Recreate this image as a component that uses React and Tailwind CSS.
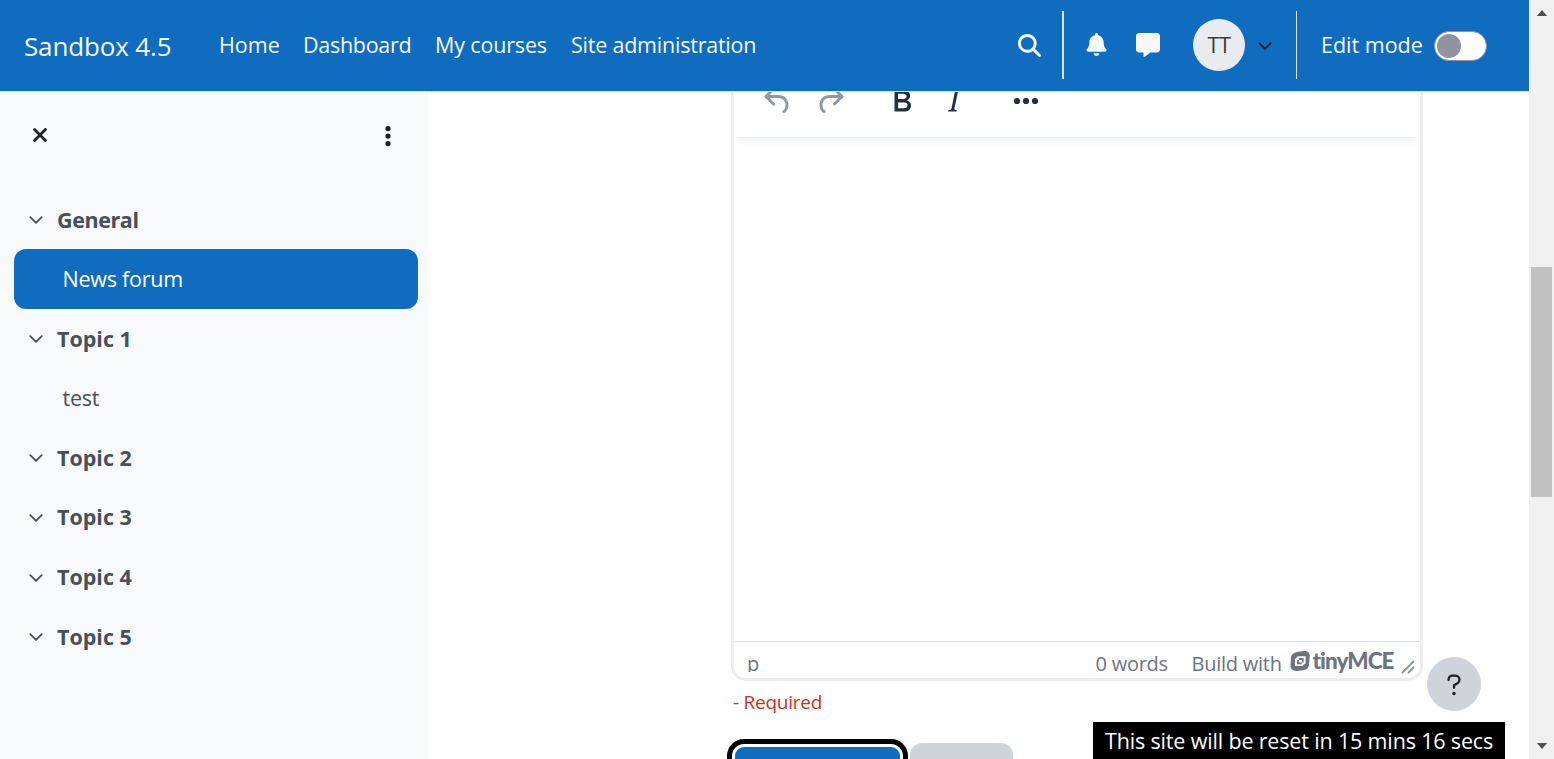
import React from "react";
import { FaMagnifyingGlass, FaBell, FaMessage, FaXmark, FaEllipsisVertical } from "react-icons/fa6";

function Chevron({ className }) {
  return (
    <svg viewBox="0 0 14 8" className={className} fill="none" stroke="currentColor" strokeWidth="1.8" strokeLinecap="round" strokeLinejoin="round">
      <path d="M1.300 1.200 L7 6.900 L12.700 1.200" />
    </svg>
  );
}

function ToolIcon({ d, className }) {
  return (
    <svg viewBox="0 0 24 24" className={`h-9 w-9 shrink-0 ${className}`} fill="currentColor" fillRule="evenodd">
      <path d={d} />
    </svg>
  );
}

const icons = {
  undo: "M6.4 8H12c3.7 0 6.2 2 6.8 5.1.6 2.7-.4 5.6-2.3 6.8a1 1 0 0 1-1-1.8c1.1-.6 1.8-2.7 1.4-4.6-.5-2.1-2.1-3.5-4.9-3.5H6.4l3.3 3.3a1 1 0 1 1-1.4 1.4l-5-5a1 1 0 0 1 0-1.4l5-5a1 1 0 0 1 1.4 1.4L6.4 8Z",
  redo: "M17.6 10H12c-2.8 0-4.4 1.4-4.9 3.5-.4 2 .3 4 1.4 4.6a1 1 0 1 1-1 1.8c-2-1.2-2.9-4.1-2.3-6.8.6-3 3-5.1 6.8-5.1h5.6l-3.3-3.3a1 1 0 1 1 1.4-1.4l5 5a1 1 0 0 1 0 1.4l-5 5a1 1 0 0 1-1.4-1.4l3.3-3.3Z",
  bold: "M7.8 19c-.3 0-.5 0-.6-.2l-.2-.5V5.7c0-.2 0-.4.2-.5l.6-.2h5c1.5 0 2.7.3 3.5 1 .7.6 1.1 1.4 1.1 2.5a3 3 0 0 1-.6 1.9c-.4.6-1 1-1.6 1.2.4.1.9.3 1.3.6s.8.7 1 1.2c.4.4.5 1 .5 1.6 0 1.3-.4 2.3-1.3 3-.8.7-2.1 1-3.8 1H7.8Zm5-8.3c.6 0 1.2-.1 1.6-.5.4-.3.6-.7.6-1.3 0-1.1-.8-1.7-2.3-1.7H9.3v3.5h3.4Zm.5 6c.7 0 1.3-.1 1.7-.4.4-.4.6-.9.6-1.5s-.2-1-.7-1.4c-.4-.3-1-.4-2-.4H9.4v3.8h4Z",
  italic: "m16.7 4.7-.1.9h-.3c-.6 0-1 0-1.4.3-.3.3-.4.6-.5 1.1l-2.1 9.8v.6c0 .5.4.8 1.4.8h.2l-.2.8H8l.2-.8h.2c1.1 0 1.8-.5 2-1.5l2-9.8.1-.5c0-.6-.4-.8-1.4-.8h-.3l.2-.9h5.8Z",
};

function Header() {
  return (
    <header className="flex h-[92px] shrink-0 items-center border-b border-[#dee2e6] bg-[#0f6cbf] pb-[2px] text-[21.5px] leading-none text-[#f8f9fa]">
      <div className="ml-6 w-[195px] pt-[3px] text-[26px] tracking-[-0.150px] whitespace-nowrap">Sandbox 4.5</div>
      <nav className="flex pt-px whitespace-nowrap">
        <a className="w-[84px]">Home</a>
        <a className="w-[132px] tracking-[-0.300px]">Dashboard</a>
        <a className="w-[136px] tracking-[-0.150px]">My courses</a>
        <a className="tracking-[-0.220px]">Site administration</a>
      </nav>
      <div className="ml-auto flex items-center">
        <FaMagnifyingGlass className="mt-px size-[23px]" />
        <div className="ml-[21px] h-[68px] w-[2px] bg-[#dee2e6]" />
        <FaBell className="ml-[20.500px] size-[23px]" />
        <FaMessage className="ml-[28.500px] size-[24px]" />
        <div className="mt-px ml-[33px] flex size-[52px] items-center justify-center rounded-full bg-[#e9ecef] tracking-[-0.300px] text-[#343a40]">TT</div>
        <Chevron className="mt-[2px] ml-[12.500px] h-[8px] w-[14px] text-[#1d2125]" />
        <div className="ml-[24.500px] h-[68px] w-px bg-[#dee2e6]" />
        <span className="ml-[24px] w-[113px] pt-px whitespace-nowrap">Edit mode</span>
        <div className="mt-[2px] mr-[42px] flex h-[30px] w-[53px] items-center rounded-full border border-[#8f959e] bg-white pl-[2px]">
          <div className="size-[24px] rounded-full bg-[#8f959e]" />
        </div>
      </div>
    </header>
  );
}

function Section({ title }) {
  return (
    <div className="flex h-[59.6px] items-center pl-[29px] font-bold">
      <Chevron className="mt-px h-[8px] w-[14px]" />
      <span className={title === "General" ? "ml-[14px] pt-px tracking-[-0.400px]" : "ml-[14px]"}>{title}</span>
    </div>
  );
}

function Sidebar() {
  return (
    <aside className="w-[428px] shrink-0 bg-[#f8f9fa] text-[21.5px] text-[#495057]">
      <div className="flex h-[97.8px] items-start justify-between pt-[32px] pr-[28px] pl-[29px] text-[#1d2125]">
        <FaXmark className="size-[22px]" />
        <FaEllipsisVertical className="size-[24px]" />
      </div>
      <Section title="General" />
      <div className="mr-[10px] ml-[14px] flex h-[59.6px] items-center rounded-xl bg-[#0f6cbf] pl-[48.500px] tracking-[-0.250px] text-white">News forum</div>
      <Section title="Topic 1" />
      <div className="flex h-[59.6px] items-center pl-[62.500px] tracking-[-0.250px]">test</div>
      <Section title="Topic 2" />
      <Section title="Topic 3" />
      <Section title="Topic 4" />
      <Section title="Topic 5" />
    </aside>
  );
}

function Editor() {
  return (
    <div className="flex h-[589px] w-[692px] flex-col overflow-hidden rounded-b-[15px] border-x-[3px] border-b-[3px] border-[#eeeeee] bg-white">
      <div className="h-[45px] shrink-0 overflow-hidden">
        <div className="-mt-[9px] flex pl-[26px] text-[#222f3e]">
          <ToolIcon d={icons.undo} className="text-[#9197a0]" />
          <ToolIcon d={icons.redo} className="ml-[16px] text-[#9197a0]" />
          <ToolIcon d={icons.bold} className="ml-[36px]" />
          <ToolIcon d={icons.italic} className="ml-[16px]" />
          <svg viewBox="0 0 36 36" className="ml-[36px] h-9 w-9" fill="currentColor">
            <circle cx="9" cy="18" r="3.1" />
            <circle cx="18" cy="18" r="3.1" />
            <circle cx="27" cy="18" r="3.1" />
          </svg>
        </div>
      </div>
      <div className="h-[22px] shrink-0 overflow-hidden px-[1px]">
        <div className="-mt-[20px] h-[20px] shadow-[0_2px_2px_-2px_rgba(34,47,62,0.1),0_8px_8px_-4px_rgba(34,47,62,0.07)]" />
      </div>
      <div className="flex-1" />
      <div className="flex h-[37px] shrink-0 items-start border-t border-[#e3e3e3] pr-[5px] pl-[13px] text-[20px] leading-[43px] tracking-[-0.250px] text-[#6b747f]">
        <span className="h-[30px] overflow-hidden">p</span>
        <span className="ml-auto w-[96px] whitespace-nowrap">0 words</span>
        <span className="w-[98px] whitespace-nowrap">Build with</span>
        <svg viewBox="0 0 20 20" className="mt-[9px] size-5" fill="currentColor">
          <path d="M7 .9 13.500.1C17.500-.3 20 2 19.700 5.500l-.6 8c-.2 3-1.900 5-4.900 5.500l-6.900.9C3 20.300.300 18.300.500 15L.9 7C1.100 3.500 3.300 1.400 7 .9Z" />
          <path d="M8 5.200h7.600v7L12.300 15H5V8Z" fill="#fff" />
          <path d="M8.900 7.100h4.700v4.400h-1.900v1.800H7V9h1.900Z" />
          <path d="M8.900 9h2.900v2.600H8.900Z" fill="#fff" />
        </svg>
        <span className="ml-[3px] w-[88.500px] font-[Lato] text-[22.5px] leading-[37px] font-black tracking-[-0.950px] whitespace-nowrap">tinyMCE</span>
        <svg viewBox="0 0 14 14" className="mt-[18px] size-[14px] text-[#8b929a]" fill="none" stroke="currentColor" strokeWidth="1.8" strokeLinecap="round">
          <path d="M1.500 12.500 12.500 1.500M7.500 12.500 12.500 7.500" />
        </svg>
      </div>
    </div>
  );
}

function Scrollbar() {
  return (
    <div className="flex w-[25px] shrink-0 flex-col items-center bg-[#f0f0f0]">
      <svg viewBox="0 0 12 7" className="mt-[10px] h-[6px] w-[12px]"><path d="M0 7 6 0 12 7Z" fill="#505050" /></svg>
      <div className="mt-[251px] h-[230px] w-[21px] bg-[#c1c1c1]" />
      <svg viewBox="0 0 12 7" className="mt-auto mb-[10px] h-[6px] w-[12px]"><path d="M0 0 6 7 12 0Z" fill="#505050" /></svg>
    </div>
  );
}

export default function App() {
  return (
    <div className="relative flex h-[759px] w-[1554px] overflow-hidden bg-white font-['Open_Sans','Noto_Sans',sans-serif]">
      <div className="flex min-w-0 flex-1 flex-col">
        <Header />
        <div className="flex min-h-0 flex-1">
          <Sidebar />
          <main className="flex-1 overflow-hidden pl-[303px]">
            <Editor />
            <div className="mt-[6px] pl-[2px] text-[19px] leading-[30px] tracking-[-0.250px] text-[#ca3120]">- Required</div>
            <div className="-ml-[4px] flex pt-[22px]">
              <div className="h-[60px] w-[181px] rounded-[17px] border-[5px] border-black bg-white p-[3px]">
                <div className="h-full rounded-[9px] bg-[#0f6cbf]" />
              </div>
              <div className="mt-[4px] ml-[2px] h-[56px] w-[103px] rounded-xl bg-[#ced4da]" />
            </div>
          </main>
        </div>
      </div>
      <Scrollbar />
      <div className="absolute top-[657px] left-[1427px] flex size-[54px] items-center justify-center rounded-full bg-[#ced4da] text-[#1d2125]">
        <svg viewBox="0 0 14 22" className="mt-[2px] h-[22px] w-[14px]" fill="none" stroke="currentColor" strokeWidth="2.300" strokeLinecap="round" strokeLinejoin="round">
          <path d="M1.500 6C1.500 3.200 3.200 1.700 5.500 1.700h2.700c2.500 0 4.300 1.700 4.300 4 0 1.500-.7 2.700-2 3.500L7 11.200v2.600" />
          <circle cx="7" cy="19.500" r="1.700" fill="currentColor" stroke="none" />
        </svg>
      </div>
      <div className="absolute top-[722px] left-[1093px] flex h-[37px] w-[412px] items-center bg-black pt-[2px] pl-[12px] text-[21.5px] tracking-[-0.160px] whitespace-nowrap text-white">
        This site will be reset in 15 mins 16 secs
      </div>
    </div>
  );
}
